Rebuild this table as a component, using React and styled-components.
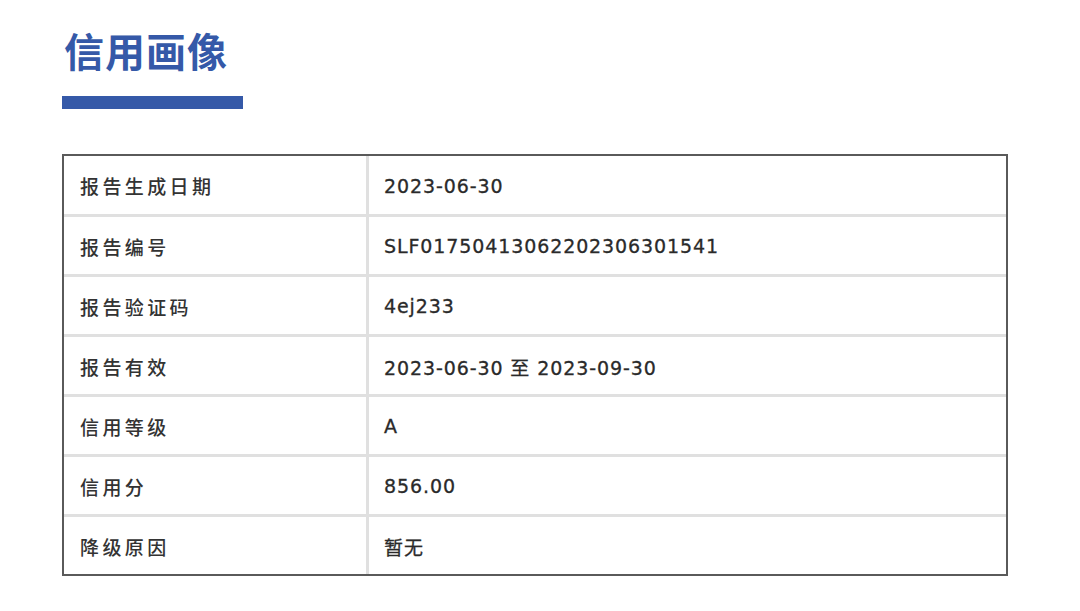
import React from 'react';
import styled, { createGlobalStyle } from 'styled-components';

const Global = createGlobalStyle`
  body {
    margin: 0;
    background: #fff;
    font-family: "Noto Sans CJK SC", "Noto Sans", sans-serif;
  }
`;

const Page = styled.div`
  padding: 22px 72px 0 62px;
`;

const Title = styled.h1`
  margin: 0 0 0 2px;
  font-size: 40px;
  line-height: 56px;
  font-weight: 700;
  color: #3559a8;
  letter-spacing: 1px;
`;

const Bar = styled.div`
  width: 181px;
  height: 13px;
  margin-top: 18px;
  background: #3559a8;
`;

const Table = styled.div`
  margin-top: 45px;
  border: 2px solid #5a5a5a;
  display: grid;
  grid-template-columns: 302px 1fr;
`;

const Cell = styled.div`
  height: ${(props) => (props.first ? '58px' : '60px')};
  box-sizing: border-box;
  display: flex;
  align-items: center;
  padding-left: ${(props) => props.pl};
  padding-top: 1px;
  color: #2e2e2e;
  border-top: ${(props) => (props.first ? 'none' : '3px solid #e0e0e0')};
  border-left: ${(props) => (props.right ? '3px solid #e0e0e0' : 'none')};
`;

const Label = styled.span`
  font-family: "Noto Sans CJK SC", sans-serif;
  font-size: 19px;
  font-weight: 500;
  letter-spacing: 3.4px;
  color: #333;
`;

const Value = styled.span`
  font-family: "DejaVu Sans", "Noto Sans CJK SC", sans-serif;
  font-size: 19px;
  letter-spacing: 0.9px;
  color: #2a2a2a;
  -webkit-text-stroke: 0.3px #2a2a2a;
`;

const rows = [
  ['报告生成日期', '2023-06-30'],
  ['报告编号', 'SLF01750413062202306301541'],
  ['报告验证码', '4ej233'],
  ['报告有效', '2023-06-30 至 2023-09-30'],
  ['信用等级', 'A'],
  ['信用分', '856.00'],
  ['降级原因', '暂无'],
];

const App = () => {
  return (
    <Page>
      <Global />
      <Title>信用画像</Title>
      <Bar />
      <Table>
        {rows.map(([k, v], i) => (
          <React.Fragment key={k}>
            <Cell first={i === 0} pl={'16px'}>
              <Label>{k}</Label>
            </Cell>
            <Cell first={i === 0} right pl={'15px'}>
              <Value>{v}</Value>
            </Cell>
          </React.Fragment>
        ))}
      </Table>
    </Page>
  );
};

export default App;
